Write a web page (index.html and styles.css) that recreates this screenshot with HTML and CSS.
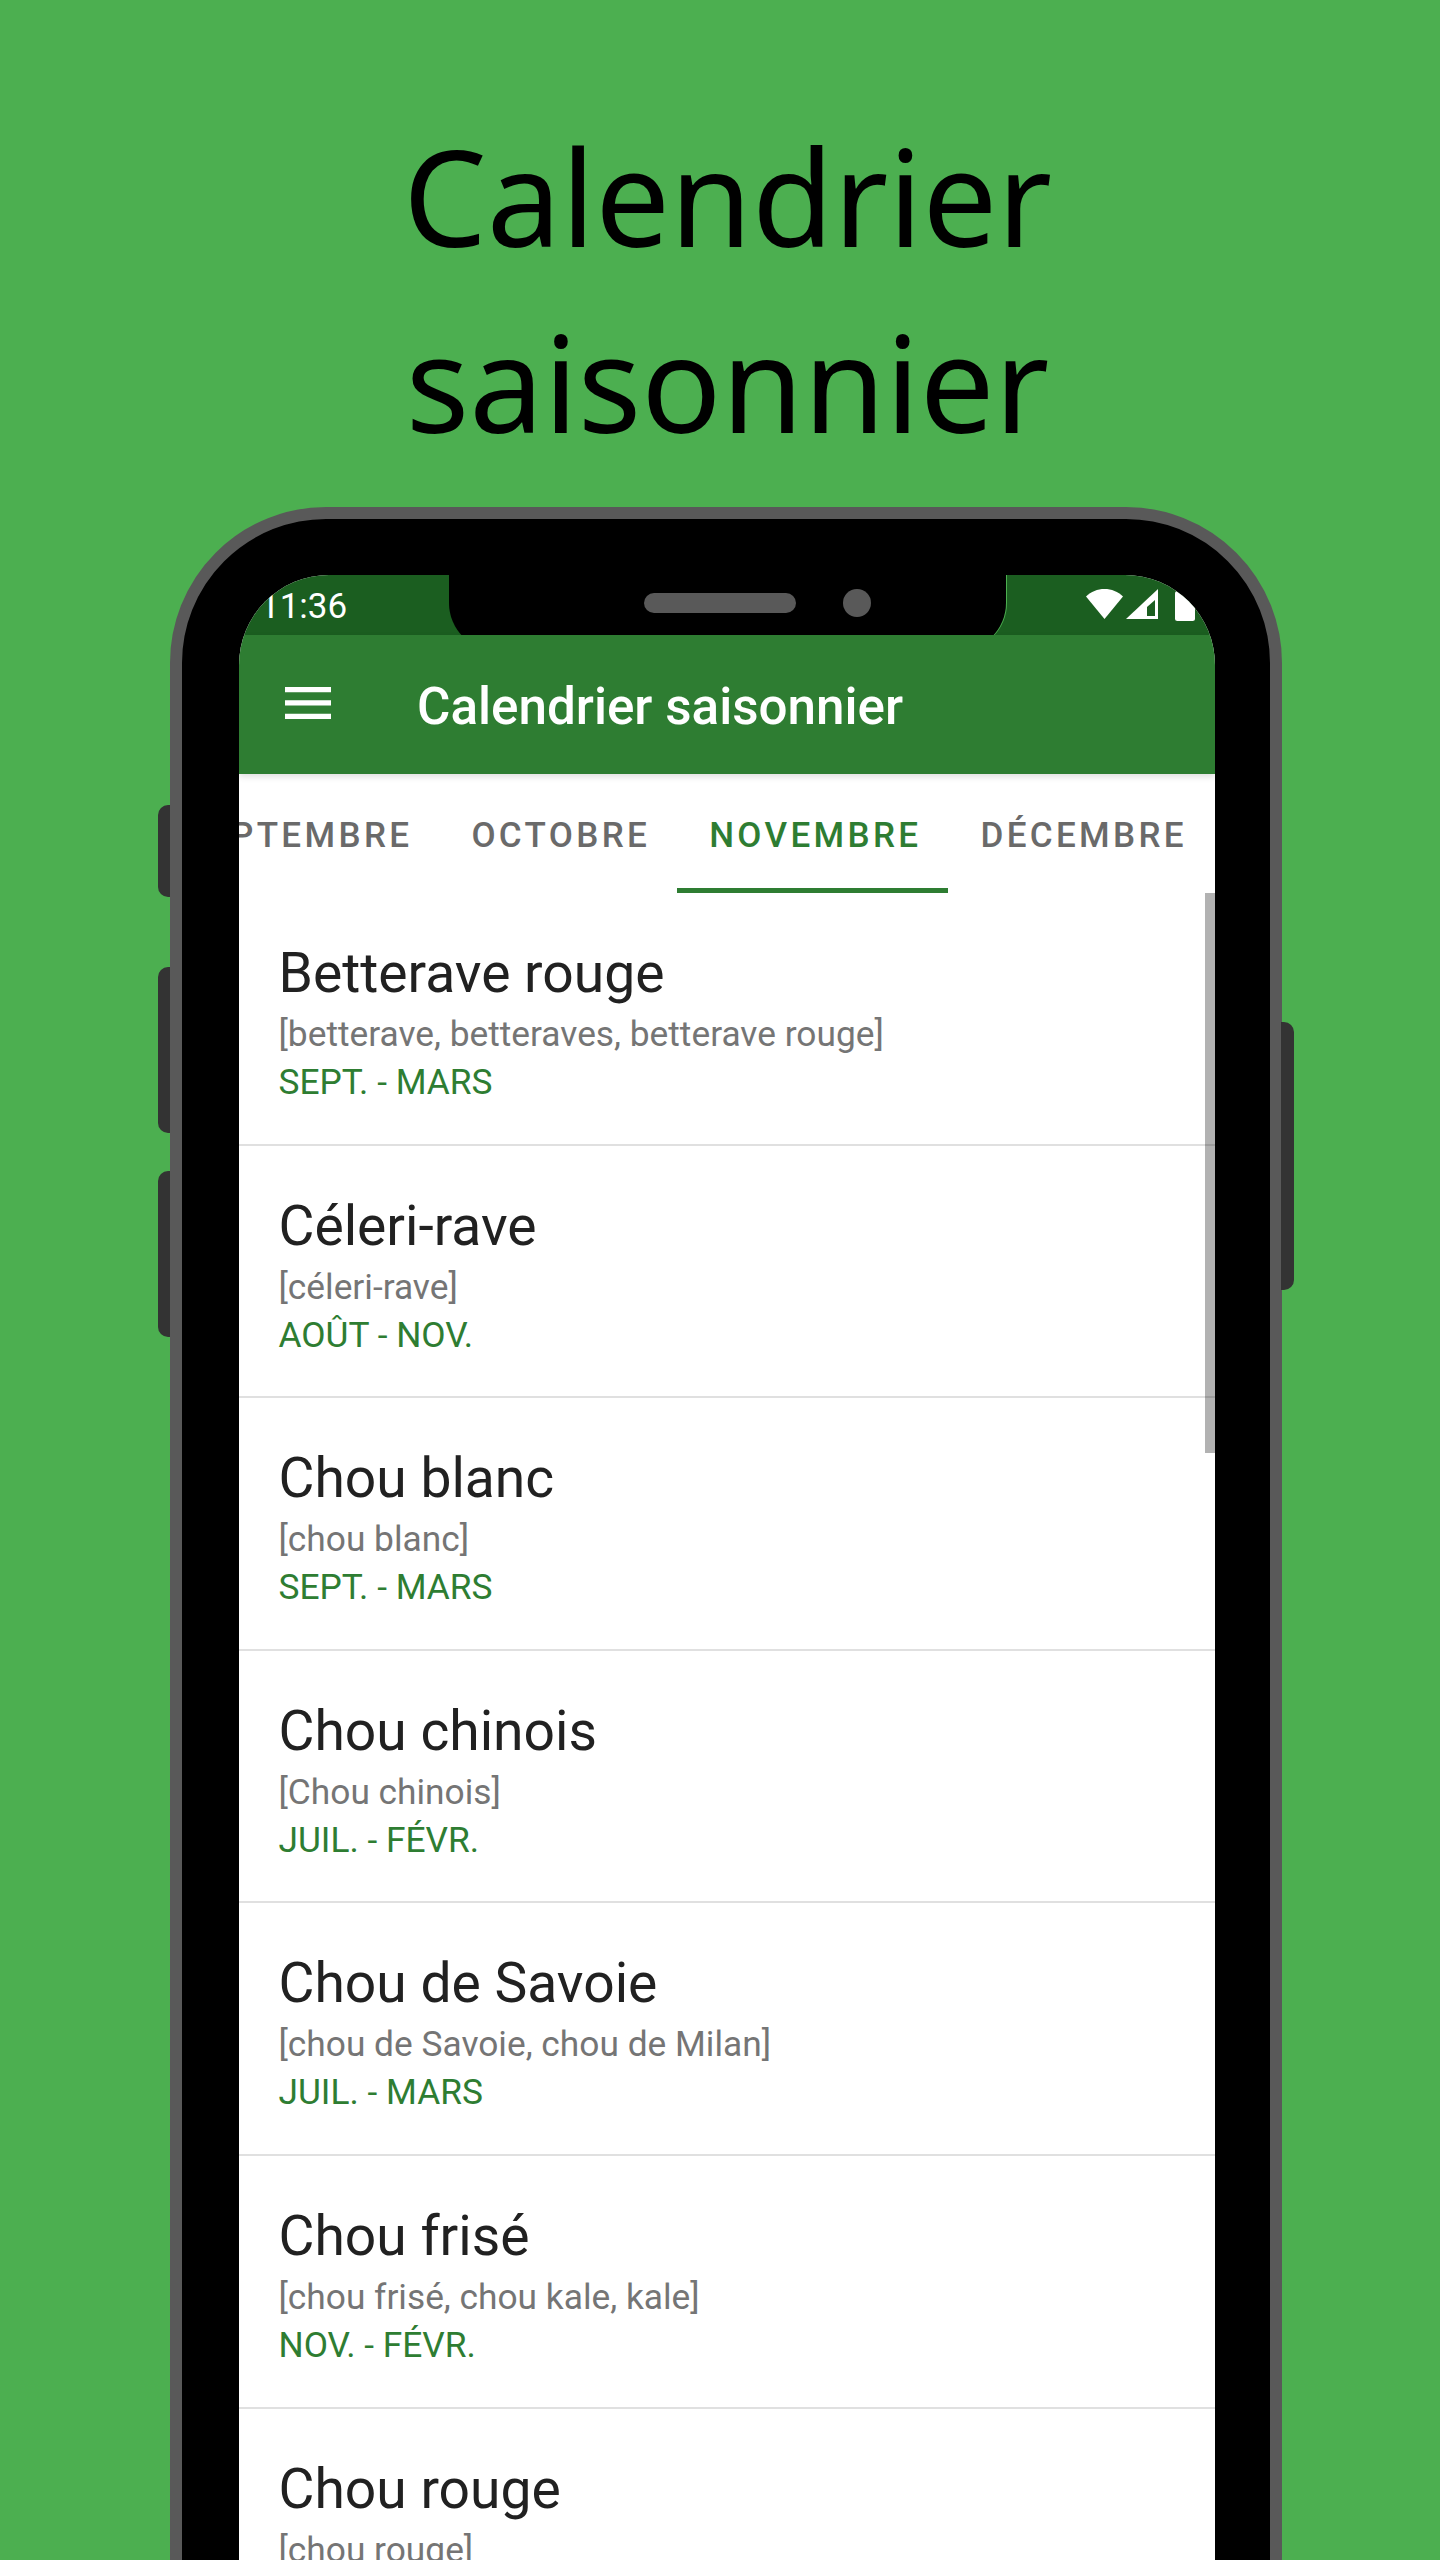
FILE: index.html
```html
<!DOCTYPE html>
<html lang="fr">
<head>
  <meta charset="UTF-8">
  <title>Calendrier saisonnier</title>
  <link rel="stylesheet" href="styles.css">
</head>
<body>

<h1 class="headline">Calendrier<br>saisonnier</h1>

<div class="phone">
  <span class="side-btn left btn-1"></span>
  <span class="side-btn left btn-2"></span>
  <span class="side-btn left btn-3"></span>
  <span class="side-btn right btn-4"></span>

  <div class="screen">
    <div class="notch">
      <span class="speaker"></span>
      <span class="camera"></span>
    </div>

    <div class="statusbar">
      <span class="clock">11:36</span>
      <div class="status-icons">
        <svg class="ic-wifi" viewBox="0 0 37 30"><path d="M0 7.5C5 2.5 11.500 0 18.500 0S32 2.500 37 7.500L18.500 30z" fill="#fff"/></svg>
        <svg class="ic-signal" viewBox="0 0 32 30"><path d="M32 0v30H0z" fill="#fff"/><path d="M29 11v16h-8V18z" fill="#1b5e20"/></svg>
        <svg class="ic-battery" viewBox="0 0 20 30"><rect width="20" height="30" rx="2.500" fill="#fff"/></svg>
      </div>
    </div>

    <header class="appbar">
      <svg class="ic-menu" viewBox="0 0 46 32"><path d="M0 0h46v5.300H0zM0 13.300h46v5.300H0zM0 26.700h46V32H0z" fill="#fff"/></svg>
      <span class="appbar-title">Calendrier saisonnier</span>
    </header>

    <nav class="tabs">
      <span class="tab">SEPTEMBRE</span>
      <span class="tab">OCTOBRE</span>
      <span class="tab active">NOVEMBRE</span>
      <span class="tab">DÉCEMBRE</span>
    </nav>

    <div class="list">
      <span class="scrollbar"></span>

      <div class="row">
        <div class="name">Betterave rouge</div>
        <div class="aliases">[betterave, betteraves, betterave rouge]</div>
        <div class="season">SEPT. - MARS</div>
      </div>
      <div class="row">
        <div class="name">Céleri-rave</div>
        <div class="aliases">[céleri-rave]</div>
        <div class="season">AOÛT - NOV.</div>
      </div>
      <div class="row">
        <div class="name">Chou blanc</div>
        <div class="aliases">[chou blanc]</div>
        <div class="season">SEPT. - MARS</div>
      </div>
      <div class="row">
        <div class="name">Chou chinois</div>
        <div class="aliases">[Chou chinois]</div>
        <div class="season">JUIL. - FÉVR.</div>
      </div>
      <div class="row">
        <div class="name">Chou de Savoie</div>
        <div class="aliases">[chou de Savoie, chou de Milan]</div>
        <div class="season">JUIL. - MARS</div>
      </div>
      <div class="row">
        <div class="name">Chou frisé</div>
        <div class="aliases">[chou frisé, chou kale, kale]</div>
        <div class="season">NOV. - FÉVR.</div>
      </div>
      <div class="row">
        <div class="name">Chou rouge</div>
        <div class="aliases">[chou rouge]</div>
        <div class="season">SEPT. - MARS</div>
      </div>
    </div>
  </div>
</div>

</body>
</html>
```

FILE: styles.css
```css
html, body {
  margin: 0;
  padding: 0;
  height: 2560px;
  overflow: hidden;
}

body {
  background: #4caf50;
  font-family: Roboto, sans-serif;
}

.headline {
  margin: 0;
  padding: 103px 0 0 15px;
  height: 403px;
  box-sizing: border-box;
  text-align: center;
  font-family: "Noto Sans", sans-serif;
  font-weight: 400;
  font-size: 132.600px;
  line-height: 186px;
  color: #000;
}

.phone {
  position: relative;
  box-sizing: border-box;
  width: 1112px;
  height: 2300px;
  margin-left: 170px;
  padding: 56px 55px 0 57px;
  margin-top: 104px;
  background: #000;
  border: 12px solid #595959;
  border-radius: 156px;
}

.side-btn {
  position: absolute;
  width: 12px;
  background: #333;
}
.side-btn.left { left: -24px; border-radius: 10px 0 0 10px; }
.side-btn.right { right: -24px; width: 13px; border-radius: 0 10px 10px 0; }
.btn-1 { top: 286px; height: 92px; }
.btn-2 { top: 448px; height: 166px; }
.btn-3 { top: 652px; height: 166px; }
.btn-4 { top: 503px; height: 268px; }

.screen {
  position: relative;
  height: 100%;
  overflow: hidden;
  background: #fff;
  border-radius: 90px 90px 0 0;
}

.notch {
  position: absolute;
  top: 0;
  left: 210px;
  width: 557px;
  height: 76px;
  background: #000;
  border-radius: 0 0 48px 48px;
  box-shadow: 1px 0 0 #4caf50;
}
.speaker {
  position: absolute;
  left: 195px;
  top: 18px;
  width: 152px;
  height: 20px;
  background: #595959;
  border-radius: 10px;
}
.camera {
  position: absolute;
  left: 394px;
  top: 14px;
  width: 28px;
  height: 28px;
  background: #595959;
  border-radius: 50%;
}

.statusbar {
  display: flex;
  justify-content: space-between;
  align-items: center;
  height: 60px;
  background: #1b5e20;
  color: #fff;
}
.clock {
  margin: 4px 0 0 21px;
  font-size: 35px;
  line-height: 56px;
}
.status-icons {
  display: flex;
  align-items: flex-start;
  height: 60px;
  padding-top: 14px;
  box-sizing: border-box;
}
.ic-wifi { width: 37px; height: 30px; margin-right: 3px; }
.ic-signal { width: 32px; height: 30px; margin-right: 17px; }
.ic-battery { width: 20px; height: 30px; margin-top: 2px; margin-right: 20px; }

.appbar {
  position: relative;
  display: flex;
  align-items: center;
  height: 139px;
  background: #2e7d32;
  color: #fff;
  box-shadow: 0 3px 6px rgba(0, 0, 0, 0.12);
}
.ic-menu {
  width: 46px;
  height: 32px;
  margin-left: 46px;
  margin-bottom: 3px;
}
.appbar-title {
  margin: 4px 0 0 86px;
  font-size: 51.200px;
  font-weight: 500;
}

.tabs {
  display: flex;
  justify-content: flex-end;
  height: 119px;
  padding-right: 1px;
  white-space: nowrap;
  overflow: hidden;
}
.tab {
  flex: none;
  box-sizing: border-box;
  height: 119px;
  padding: 0 27px 0 32px;
  line-height: 124px;
  font-size: 35px;
  font-weight: 500;
  letter-spacing: 3.350px;
  color: #6a6a6a;
}
.tab.active {
  color: #2e7d32;
  border-bottom: 5px solid #2e7d32;
}

.list {
  position: relative;
}
.scrollbar {
  position: absolute;
  top: 0;
  right: 0;
  width: 10px;
  height: 560px;
  background: rgba(0, 0, 0, 0.3);
}

.row {
  box-sizing: border-box;
  height: 252.600px;
  padding: 45px 39.500px 0;
  border-bottom: 2.500px solid #e0e0e0;
}
.name {
  font-size: 55.200px;
  line-height: 70px;
  color: #212121;
}
.aliases {
  margin-top: 3px;
  font-size: 35.300px;
  line-height: 46px;
  color: #757575;
}
.season {
  margin-top: 1px;
  font-size: 35.300px;
  line-height: 48px;
  color: #2e7d32;
}
```
